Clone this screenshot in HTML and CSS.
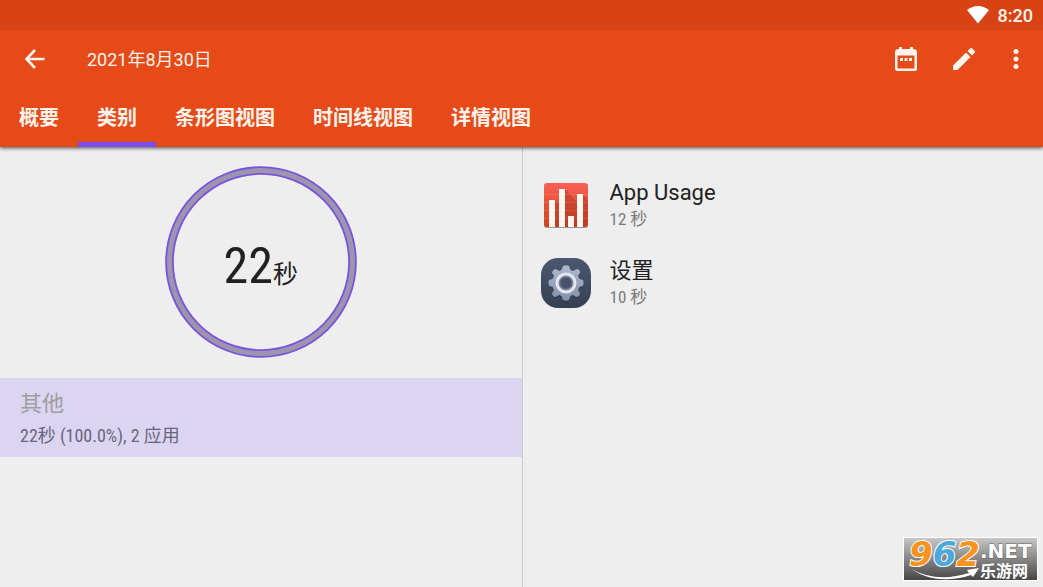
FILE: index.html
```html
<!DOCTYPE html>
<html lang="zh-CN">
<head>
<meta charset="utf-8">
<meta name="viewport" content="width=device-width, initial-scale=1">
<title>App Usage</title>
<link rel="stylesheet" href="styles.css">
</head>
<body>
<div class="app">
  <header class="header">
    <div class="status">
      <svg class="wifi" viewBox="0 0 22 18" aria-hidden="true"><path d="M0 4Q11-4 22 4L11 17.500Z"/></svg>
      <time>8:20</time>
    </div>
    <div class="toolbar">
      <button class="icon-button" type="button" aria-label="返回"><svg viewBox="0 0 24 24"><path d="M12 3 3.500 12 12 21M4 12H21.500" fill="none" stroke="#fff4ec" stroke-width="2.600"/></svg></button>
      <h1 class="title">2021年8月30日</h1>
      <div class="actions">
        <button class="icon-button" type="button" aria-label="日期"><svg viewBox="0 0 24 24"><path fill-rule="evenodd" d="M5 2V0h3v2h8V0h3v2q4 0 4 3V21.500Q23 24 20.500 24h-17Q1 24 1 21.500V5Q1 2 5 2ZM3.500 8.500V21.500h17V8.500ZM6 11h3v3h-3Zm4.500 0h3v3h-3Zm4.500 0h3v3h-3Z"/></svg></button>
        <button class="icon-button" type="button" aria-label="编辑"><svg viewBox="0 0 24 24"><path d="M1 18.500V23h4.500L18.500 10 14 5.500ZM22.800 5.700q.8-.8 0-1.600l-2.900-2.900q-.8-.8-1.600 0L15.500 4l4.500 4.500Z"/></svg></button>
        <button class="icon-button more" type="button" aria-label="更多"><svg viewBox="0 0 24 24"><circle cx="12" cy="4.500" r="2.500"/><circle cx="12" cy="12" r="2.500"/><circle cx="12" cy="19.500" r="2.500"/></svg></button>
      </div>
    </div>
    <nav class="tabs">
      <a class="tab" href="#summary">概要</a>
      <a class="tab active" href="#category" aria-current="page">类别</a>
      <a class="tab" href="#bars">条形图视图</a>
      <a class="tab" href="#timeline">时间线视图</a>
      <a class="tab" href="#details">详情视图</a>
    </nav>
  </header>
  <main class="panes">
    <section class="categories">
      <div class="chart">
        <svg class="ring" viewBox="0 0 192 192" aria-hidden="true"><circle cx="96" cy="96" r="91.500" fill="none" stroke="#7c51e0" stroke-width="8.600"/><circle cx="96" cy="96" r="91.500" fill="none" stroke="#9b96ad" stroke-width="5"/></svg>
        <p class="total"><span class="total-number">22</span><span class="total-unit">秒</span></p>
      </div>
      <a class="category" href="#other">
        <span class="category-name">其他</span>
        <span class="category-info">22秒 (100.0%), 2 应用</span>
      </a>
    </section>
    <ul class="apps">
      <li class="app-item">
        <svg class="app-icon" viewBox="0 0 50 50" aria-hidden="true">
          <defs><linearGradient id="red" x2="0" y2="1"><stop stop-color="#fb6055"/><stop offset="1" stop-color="#ce421f"/></linearGradient></defs>
          <rect x="3" y="4" width="44" height="44" rx="3" fill="#999"/>
          <rect x="3" y="3" width="44" height="44" rx="3" fill="url(#red)"/>
          <path d="M24 9 37 23V47H24ZM41 14l6 6v24l-6 3ZM14 20l4 4v23h-4Z" fill="#a83221" opacity=".4"/>
          <path d="M3 14.500h44M3 22.500h44M3 30.500h44M3 38.500h44" stroke="#fff" opacity=".1"/>
          <path d="M8 20h6v27H8ZM18 9h6v38h-6ZM27 36h6v11h-6ZM36 14h6v33h-6Z" fill="#fff5ef"/>
        </svg>
        <div class="app-text"><span class="app-name">App Usage</span><span class="app-time">12 秒</span></div>
      </li>
      <li class="app-item">
        <svg class="app-icon" viewBox="0 0 50 50" aria-hidden="true">
          <defs>
            <linearGradient id="slate" x2="0" y2="1"><stop stop-color="#4a5870"/><stop offset="1" stop-color="#354052"/></linearGradient>
            <linearGradient id="metal" x2="0" y2="1"><stop stop-color="#acb9cd"/><stop offset="1" stop-color="#8391aa"/></linearGradient>
            <path id="gear" d="M20.500 12 22 8Q25 6.500 28 8L29.500 12 32 13 36 11Q39.500 11.500 39 15L37 18 38.500 21 42 22Q43.500 25 42 28L38.500 29 37 32 39 35.500Q38.500 39 35 39L32 37 29.500 38 28 42Q25 43.500 22 42L20.500 38 18 37 15 39Q11.500 39 11 35.500L13 32 11.500 29 8 28Q6.500 25 8 22L11.500 21 13 18 11 15Q11.500 11.500 15 11L18 13Z"/>
          </defs>
          <rect width="50" height="50" rx="17" fill="url(#slate)"/>
          <use href="#gear" y="1" fill="#29364b"/>
          <use href="#gear" fill="url(#metal)"/>
          <circle cx="25" cy="25" r="9" fill="#7d899f" stroke="#e1e6ef" stroke-width="3"/>
          <circle cx="25" cy="25" r="6" fill="#46536a" stroke="#657288" stroke-width="1"/>
        </svg>
        <div class="app-text"><span class="app-name">设置</span><span class="app-time">10 秒</span></div>
      </li>
    </ul>
  </main>
  <svg class="watermark" viewBox="0 0 135 44" role="img" aria-label="962.NET 乐游网">
    <defs><linearGradient id="shade" x2="0" y2="1"><stop stop-color="#c8c8c8"/><stop offset="1" stop-color="#444"/></linearGradient></defs>
    <rect x=".5" y=".5" width="134" height="43" fill="url(#shade)" stroke="#fff"/>
    <text class="logo-number" x="6" y="29"><tspan fill="#f7931e">9</tspan><tspan fill="#4ba9dc">6</tspan><tspan fill="#f7931e">2</tspan></text>
    <path d="M8 32Q34 46 66 36L64 33 76 31 70 40 68 38Q34 49 8 32Z" fill="#fff"/>
    <text class="logo-net" x="77" y="21">.NET</text>
    <text class="logo-cn" x="77" y="40">乐游网</text>
  </svg>
</div>
</body>
</html>
```
FILE: styles.css
```css
* { box-sizing: border-box; }
body {
  margin: 0;
  background: #eee;
  color: #212121;
  font-family: Roboto, "Noto Sans CJK SC", sans-serif;
}
.app { position: relative; display: flex; flex-direction: column; min-height: 100vh; }
a { color: inherit; text-decoration: none; }
.header {
  position: relative;
  background: #e64a19;
  color: #fff4ec;
  box-shadow: 0 1px 4px rgba(0, 0, 0, .7);
}
.status {
  display: flex;
  align-items: center;
  justify-content: flex-end;
  gap: 9px;
  height: 30px;
  padding-right: 10px;
  background: #d84315;
  font-size: 18px;
  font-weight: 500;
}
.wifi { width: 22px; height: 18px; fill: #fff; }
.toolbar { display: flex; align-items: center; height: 58px; padding: 0 15px; }
.icon-button { display: flex; padding: 8px; border: 0; background: none; cursor: pointer; }
.icon-button svg { width: 24px; height: 24px; fill: #fff4ec; }
.title { margin: 0 0 0 32px; padding-top: 2px; font-size: 18px; line-height: 24px; font-weight: 400; }
.actions { display: flex; gap: 18px; margin-left: auto; }
.more { margin: 0 -8px 0 -6px; }
.tabs { display: flex; height: 59px; }
.tab {
  display: flex;
  align-items: center;
  padding: 6px 19px 0;
  border-bottom: 5px solid transparent;
  font-size: 20px;
  font-weight: 700;
  line-height: 28px;
}
.active { border-color: #7c4de8; }
.panes { display: grid; grid-template-columns: 1fr 1fr; flex: 1; }
.chart { display: grid; place-items: center; padding: 19px 0 20px; }
.chart > * { grid-area: 1 / 1; }
.ring { width: 192px; height: 192px; }
.total { display: flex; align-items: baseline; margin: 0; padding-top: 16px; line-height: 64px; }
.total-number { font-family: "Roboto Condensed", Roboto, sans-serif; font-size: 50px; }
.total-unit { font-size: 25px; }
.category {
  display: flex;
  flex-direction: column;
  gap: 4px;
  padding: 11px 20px 9px;
  background: #dcd5f2;
}
.category-name { color: #9e9e9e; font-size: 22px; line-height: 30px; }
.category-info { color: #69657a; font-family: "Roboto Condensed", Roboto, "Noto Sans CJK SC", sans-serif; font-size: 18px; line-height: 25px; }
.apps { display: flex; flex-direction: column; gap: 28px; margin: 0; padding: 33px 18px; border-left: 1px solid #ccc; list-style: none; }
.app-item { display: flex; align-items: center; gap: 19px; height: 50px; }
.app-icon { width: 50px; height: 50px; }
.app-text { display: flex; flex-direction: column; }
.app-name { font-size: 22px; line-height: 28px; }
.app-time { color: #7a7a7a; font-family: "Roboto Condensed", Roboto, "Noto Sans CJK SC", sans-serif; font-size: 17px; line-height: 24px; }
.watermark { position: absolute; right: 5px; bottom: 6px; width: 135px; height: 44px; overflow: visible; }
.logo-number {
  font: italic 700 34px "DejaVu Sans", sans-serif;
  stroke: #fff;
  stroke-width: 2px;
  paint-order: stroke;
}
.logo-net { fill: #fff; font: 700 20px "DejaVu Sans", sans-serif; stroke: #666; stroke-width: 1px; paint-order: stroke; }
.logo-cn { fill: #fff; font: 700 16px "Noto Sans CJK SC", sans-serif; }
```
